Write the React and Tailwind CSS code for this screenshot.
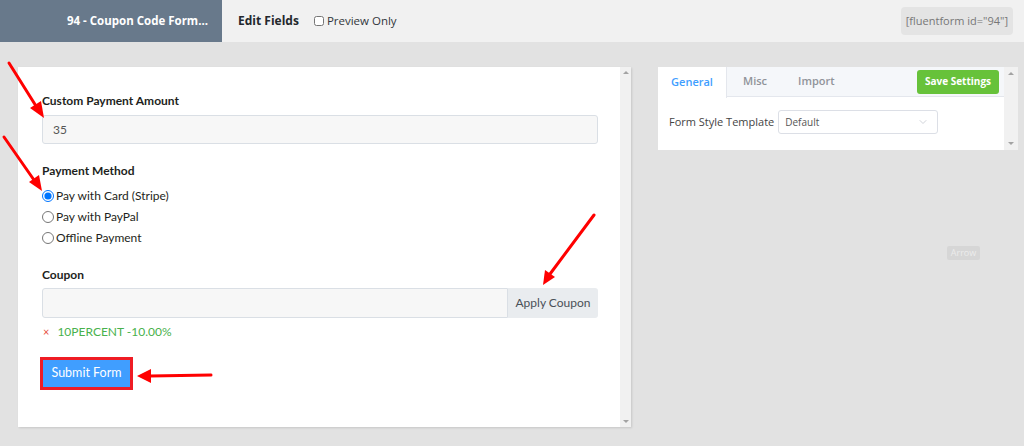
import { ChevronDown } from "lucide-react";

const lato = { fontFamily: "Lato, 'Open Sans', sans-serif" };

const Label = ({ children, className = "" }) => (
  <div className={`text-[12px] leading-[18px] font-bold text-[#1e1f21] ${className}`}>{children}</div>
);

const Radio = ({ label, checked }) => (
  <label className="flex items-center h-[21px] text-[12px] text-[#1e1f21]">
    <input type="radio" name="pm" defaultChecked={checked} className="m-0 mr-[2px] w-[12px] h-[12px]" />
    {label}
  </label>
);

const Arrows = () => (
  <svg className="absolute inset-0 pointer-events-none" width="1024" height="446" viewBox="0 0 1024 446">
    <g stroke="#f00" strokeWidth="3" strokeLinecap="round">
      <line x1="9" y1="63" x2="36" y2="106" />
      <line x1="4" y1="137" x2="34" y2="180" />
      <line x1="594" y1="215" x2="550" y2="274" />
      <line x1="211" y1="375" x2="150" y2="376" />
    </g>
    <g fill="#f00">
      <polygon points="44,118 30,108 41,101" />
      <polygon points="42,191 29,182 39,175" />
      <polygon points="543,285 545,270 555,277" />
      <polygon points="137,376 151,369 151,383" />
    </g>
  </svg>
);

export default function App() {
  return (
    <div className="relative w-[1024px] h-[446px] overflow-hidden bg-[#e2e2e2]" style={{ fontFamily: "'Open Sans', sans-serif" }}>
      {/* top bar */}
      <div className="flex items-center h-[42px] bg-[#f1f1f1]">
        <div className="w-[222px] h-full bg-[#68798b] flex items-center justify-end pr-[14px] text-white text-[11.5px] font-bold">
          94 - Coupon Code Form...
        </div>
        <div className="ml-[16px] text-[12px] font-bold text-[#23282d]">Edit Fields</div>
        <label className="ml-[15px] flex items-center text-[11.5px] text-[#32373c]">
          <input type="checkbox" className="m-0 mr-[3px] w-[10px] h-[10px]" />
          Preview Only
        </label>
        <div className="ml-auto mr-[11px] h-[28px] px-[5px] flex items-center rounded bg-[#e4e4e4] text-[11px] text-[#777]">
          [fluentform id="94"]
        </div>
      </div>

      <div className="flex items-start pt-[25px] pl-[18px]">
        {/* form preview */}
        <div className="flex w-[613px] h-[360px] bg-white shadow-[1px_1px_2px_rgba(0,0,0,0.12)]" style={lato}>
          <div className="flex-1 pl-[24px] pr-[22px] pt-[25px]">
            <Label className="mb-[5px]">Custom Payment Amount</Label>
            <div className="h-[29px] rounded-[3px] border border-[#dadfe5] bg-[#f7f7f7] flex items-center pl-[10px] text-[12px] text-[#555]">
              35
            </div>

            <Label className="mt-[18px] mb-[5px]">Payment Method</Label>
            <Radio label="Pay with Card (Stripe)" checked />
            <Radio label="Pay with PayPal" />
            <Radio label="Offline Payment" />

            <Label className="mt-[18px] mb-[4px]">Coupon</Label>
            <div className="flex h-[30px]">
              <div className="flex-1 rounded-l-[3px] border border-[#dadfe5] bg-[#f7f7f7]" />
              <div className="w-[90px] flex items-center justify-center rounded-r-[3px] bg-[#e9ecef] text-[12px] text-[#495057]">
                Apply Coupon
              </div>
            </div>
            <div className="mt-[5px] h-[18px] flex items-center text-[12px]">
              <span className="text-[#e74c3c] text-[11px] ml-[1px]">×</span>
              <span className="ml-[8px] text-[#48b14c]">10PERCENT -10.00%</span>
            </div>

            <div className="mt-[16px] ml-[-2px] w-[93px] h-[33px] border-[3px] border-[#ef1c24] bg-[#409eff] flex items-center justify-center text-white text-[12.5px]">
              Submit Form
            </div>
          </div>
          <div className="w-[11px] bg-[#f1f1f1] flex flex-col items-center justify-between py-[4px]">
            <span className="w-0 h-0 border-x-[3px] border-x-transparent border-b-[3px] border-b-[#a3a3a3]" />
            <span className="w-0 h-0 border-x-[3px] border-x-transparent border-t-[3px] border-t-[#a3a3a3]" />
          </div>
        </div>

        {/* settings panel */}
        <div className="ml-[27px] flex w-[360px] h-[83px] bg-white">
          <div className="flex-1 flex flex-col">
            <div className="h-[30px] flex items-center bg-[#f5f7fa] border-b border-[#e4e7ed] text-[11px] font-semibold">
              <div className="w-[69px] h-[31px] self-start bg-white border-r border-[#e4e7ed] flex items-center justify-center text-[#409eff]">
                General
              </div>
              <div className="ml-[16px] text-[#909399]">Misc</div>
              <div className="ml-[31px] text-[#909399]">Import</div>
              <div className="ml-auto mr-[5px] w-[82px] h-[24px] rounded-[3px] bg-[#67c23a] flex items-center justify-center text-white text-[10px] font-bold">
                Save Settings
              </div>
            </div>
            <div className="flex items-center pl-[11px] pt-[13px]">
              <span className="text-[11px] text-[#444]">Form Style Template</span>
              <div className="ml-[4px] w-[160px] h-[24px] rounded-[3px] border border-[#dcdfe6] flex items-center justify-between pl-[6px] pr-[8px] text-[10px] text-[#555]">
                Default
                <ChevronDown size={12} strokeWidth={1.5} className="text-[#c0c4cc]" />
              </div>
            </div>
          </div>
          <div className="w-[14px] bg-[#f1f1f1] flex flex-col items-center justify-between py-[5px]">
            <span className="w-0 h-0 border-x-[3px] border-x-transparent border-b-[3px] border-b-[#a3a3a3]" />
            <span className="w-0 h-0 border-x-[3px] border-x-transparent border-t-[3px] border-t-[#a3a3a3]" />
          </div>
        </div>
      </div>

      <div className="absolute left-[947px] top-[246px] w-[33px] h-[14px] rounded-[2px] bg-[#d6d6d6] flex items-center justify-center text-[9px] text-[#ececec]">
        Arrow
      </div>

      <Arrows />
    </div>
  );
}
